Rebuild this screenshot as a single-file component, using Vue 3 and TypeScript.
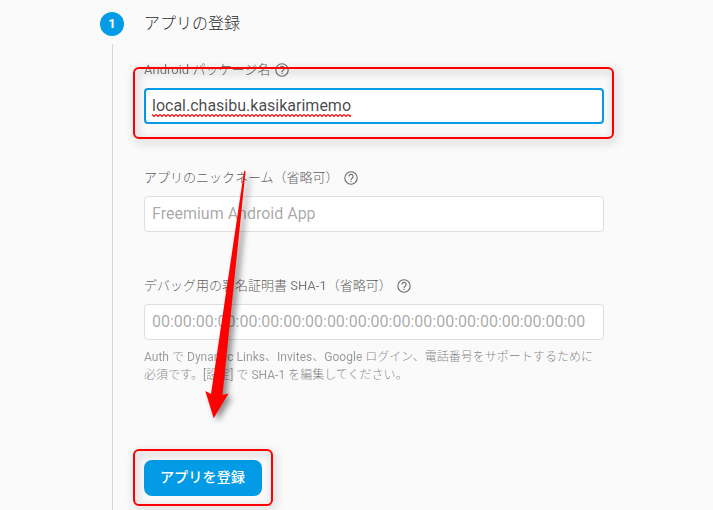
<script setup lang="ts">
interface Field {
  id: string
  label: string
  value: string
  placeholder: string
  hint: string[]
}

interface Run {
  text: string
  latin: boolean
}

const fields: Field[] = [
  { id: 'package', label: 'Android パッケージ名', value: 'local.chasibu.kasikarimemo', placeholder: '', hint: [] },
  { id: 'nickname', label: 'アプリのニックネーム（省略可）', value: '', placeholder: 'Freemium Android App', hint: [] },
  {
    id: 'sha',
    label: 'デバッグ用の署名証明書 SHA-1（省略可）',
    value: '',
    placeholder: Array(20).fill('00').join(':'),
    hint: [
      'Auth で Dynamic Links、Invites、Google ログイン、電話番号をサポートするために',
      '必須です。[設定] で SHA-1 を編集してください。',
    ],
  },
]

// Latin runs are set in regular weight, Japanese runs in light.
const runs = (text: string): Run[] =>
  (text.match(/[ -~]+|[^ -~]+/g) ?? []).map((t) => ({ text: t, latin: /^[ -~]/.test(t) }))
</script>

<template>
  <main class="page">
    <aside class="rail">
      <span class="step">1</span>
      <span class="line"></span>
    </aside>
    <section class="content">
      <h1 class="title">アプリの登録</h1>
      <div v-for="f in fields" :key="f.id" class="field" :class="f.id">
        <div class="label">
          <span class="label-text"><span v-for="(r, i) in runs(f.label)" :key="i" :class="{ latin: r.latin }">{{ r.text }}</span></span>
          <svg class="help" viewBox="0 0 16 16" aria-hidden="true">
            <circle cx="8" cy="8" r="6.200" />
            <path d="M5.900 6.500a2.100 2.100 0 1 1 3.400 1.600C8.400 8.700 8 9 8 9.900" />
            <path d="M8 10.700v1.300" />
          </svg>
        </div>
        <div class="input" :class="{ focused: f.value }">
          <span v-if="f.value" class="value">{{ f.value }}
            <svg class="squiggle" aria-hidden="true">
              <defs>
                <pattern id="wave" width="4" height="3" patternUnits="userSpaceOnUse">
                  <path d="M-1 1.500L0 .5L2 2.500L4 .5L5 1.500" fill="none" stroke="#f00" stroke-width="1.100" />
                </pattern>
              </defs>
              <rect width="100%" height="3" fill="url(#wave)" />
            </svg>
          </span>
          <span v-else class="placeholder">{{ f.placeholder }}</span>
        </div>
        <p v-if="f.hint.length" class="hint">
          <span v-for="h in f.hint" :key="h" class="hint-line"><span v-for="(r, i) in runs(h)" :key="i" :class="{ latin: r.latin }">{{ r.text }}</span></span>
        </p>
      </div>
      <button class="submit" type="button">アプリを登録</button>
    </section>

    <div class="mark mark-input"></div>
    <div class="mark mark-button"></div>
    <svg class="arrow" viewBox="0 0 713 510" aria-hidden="true">
      <path d="M244 171.500Q244.800 170 245.500 171.500L222.500 395L228.500 393.500L213.700 418.300L205.300 391L211 394Z" fill="#f00" />
    </svg>
  </main>
</template>

<style>
body {
  margin: 0;
  background: #fafafa;
}
</style>

<style scoped>
.page {
  position: relative;
  box-sizing: border-box;
  display: flex;
  gap: 20px;
  width: 713px;
  height: 510px;
  padding-left: 100px;
  overflow: hidden;
  background: #fafafa;
  font-family: Roboto, "Noto Sans CJK JP", sans-serif;
}
.rail {
  display: flex;
  flex-direction: column;
  align-items: center;
  width: 24px;
  padding-top: 12px;
}
.step {
  width: 24px;
  height: 24px;
  border-radius: 50%;
  background: #039be5;
  color: #fff;
  font-size: 13px;
  font-weight: 700;
  line-height: 24px;
  text-align: center;
}
.line {
  flex: 1;
  width: 1px;
  margin-top: 8px;
  background: #d6d6d6;
}
.content {
  width: 460px;
}
.title {
  height: 24px;
  margin: 12px 0 24px;
  color: rgba(0, 0, 0, 0.87);
  font-size: 16px;
  font-weight: 300;
  line-height: 24px;
}
.field {
  height: 108px;
}
.field.sha {
  height: 184px;
}
.label {
  display: flex;
  align-items: center;
  gap: 4px;
  height: 20px;
  margin-bottom: 8px;
  color: rgba(0, 0, 0, 0.68);
  font-size: 13px;
  line-height: 20px;
  white-space: nowrap;
}
.label-text {
  font-weight: 300;
}
.latin {
  font-weight: 400;
  opacity: 0.75;
}
.help {
  width: 16px;
  height: 16px;
  fill: none;
  stroke: rgba(0, 0, 0, 0.58);
  stroke-width: 1.1;
}
.input {
  box-sizing: border-box;
  display: flex;
  align-items: center;
  height: 36px;
  padding: 0 7px;
  border: 1px solid #dedede;
  border-radius: 4px;
  background: #fff;
  font-size: 16px;
  line-height: 24px;
  white-space: nowrap;
}
.input.focused {
  padding: 0 6px;
  border: 2px solid #039be5;
}
.value {
  position: relative;
  color: rgba(0, 0, 0, 0.72);
}
.squiggle {
  position: absolute;
  left: 0;
  bottom: 1px;
  width: 100%;
  height: 3px;
}
.placeholder {
  color: rgba(0, 0, 0, 0.36);
}
.hint {
  margin: 8px 0 0;
  color: rgba(0, 0, 0, 0.52);
  font-size: 12px;
  font-weight: 300;
  line-height: 18px;
}
.hint-line {
  display: block;
  white-space: nowrap;
  letter-spacing: 0.02px;
}
.submit {
  display: block;
  width: 118px;
  height: 36px;
  padding: 0 1px 2px 0;
  border: 0;
  border-radius: 8px;
  background: #039be5;
  color: #fff;
  font-family: inherit;
  font-size: 14.2px;
  font-weight: 500;
  line-height: 34px;
}
.mark {
  position: absolute;
  box-sizing: border-box;
  border: 2px solid #f00;
  border-radius: 6px;
  filter: drop-shadow(2px 3px 4px rgba(0, 0, 0, 0.36));
}
.mark-input {
  left: 132.500px;
  top: 66.500px;
  width: 481px;
  height: 72px;
}
.mark-button {
  left: 132.500px;
  top: 448.500px;
  width: 140px;
  height: 57px;
}
.arrow {
  position: absolute;
  left: 0;
  top: 0;
  width: 713px;
  height: 510px;
  filter: drop-shadow(4px 3px 3px rgba(0, 0, 0, 0.45));
}
</style>
